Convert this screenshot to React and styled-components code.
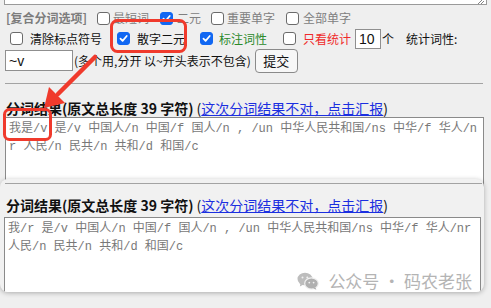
import React from "react";
import styled, { createGlobalStyle } from "styled-components";

const Global = createGlobalStyle`
  html, body { margin: 0; padding: 0; background: #ededed; }
  body { font-family: "Noto Sans CJK SC", "Noto Sans", sans-serif; font-size: 12px; color: #111; }
  * { box-sizing: border-box; }
`;

const Page = styled.div`
  position: relative;
  width: 491px;
  height: 308px;
  overflow: hidden;
  background: #efefef;
`;

const TopArea = styled.div`
  margin: 0 4px;
  height: 5px;
  background: #fff;
  border: 1px solid #9a9a9a;
  border-top: none;
  display: flex;
  justify-content: flex-end;
  align-items: flex-end;
  padding-right: 2px;
`;

const Row = styled.div`
  display: flex;
  align-items: center;
  height: ${(p) => p.h}px;
  margin-top: ${(p) => p.mt || 0}px;
  padding-left: ${(p) => p.pl || 0}px;
  white-space: nowrap;
  line-height: 1;
`;

const SectionLabel = styled.span`
  color: #7c7c7c;
  font-weight: bold;
  font-size: 12px;
  width: 81px;
`;

const Option = styled.label`
  display: inline-flex;
  align-items: center;
  gap: ${(p) => p.gap}px;
  margin-left: ${(p) => p.ml || 0}px;
  color: ${(p) => p.color || "#111"};
  font-size: 12px;
`;

const Box = styled.span`
  width: 13px;
  height: 13px;
  border-radius: 3px;
  flex: none;
  display: inline-flex;
  align-items: center;
  justify-content: center;
  background: ${(p) => (p.checked ? "#1167f2" : "#fff")};
  border: 1px solid ${(p) => (p.checked ? "#1167f2" : "#6b6b6b")};
`;

const Check = ({ checked }) => (
  <Box checked={checked}>
    {checked && (
      <svg width="9" height="9" viewBox="0 0 10 10">
        <path d="M1.6 5.2 L4 7.6 L8.6 2.2" fill="none" stroke="#fff" strokeWidth="1.9" strokeLinecap="round" strokeLinejoin="round" />
      </svg>
    )}
  </Box>
);

const TextInput = styled.div`
  width: ${(p) => p.w}px;
  height: ${(p) => p.h}px;
  margin-left: ${(p) => p.ml || 0}px;
  background: #fff;
  border: 1px solid #8f8f8f;
  font-family: "Liberation Sans", Arial, sans-serif;
  font-size: 14px;
  display: flex;
  align-items: center;
  padding-left: 3px;
  color: #111;
`;

const Plain = styled.span`
  margin-left: ${(p) => p.ml || 0}px;
  font-size: 12px;
  color: #111;
`;

const Button = styled.div`
  margin-left: ${(p) => p.ml || 0}px;
  width: 43px;
  height: 24px;
  border: 1px solid #8a8a8a;
  border-radius: 4px;
  background: #f7f7f7;
  font-size: 13px;
  display: flex;
  align-items: center;
  justify-content: center;
`;

const Rule = styled.div`
  margin: ${(p) => p.mt}px 0 0 ${(p) => p.ml}px;
  width: ${(p) => p.w}px;
  border-top: 1px solid #a3a3a3;
`;

const Heading = styled.div`
  margin: ${(p) => p.mt}px 0 0 ${(p) => p.ml}px;
  height: 18px;
  line-height: 18px;
  font-size: 14px;
  white-space: nowrap;
  color: #111;
  b { font-weight: bold; }
  a { color: #1b2fe0; text-decoration: underline; }
`;

const ResultBox = styled.div`
  margin: ${(p) => p.mt || 0}px 0 0 ${(p) => p.ml}px;
  width: ${(p) => p.w}px;
  height: ${(p) => p.h}px;
  background: #fff;
  border: 1px solid #8a8a8a;
  padding: 2px ${(p) => p.px}px;
  font-family: "Liberation Mono", "Noto Sans CJK SC", monospace;
  font-size: 12px;
  line-height: 18px;
  color: #787878;
  white-space: pre;
  overflow: hidden;
`;

const Card = styled.div`
  position: relative;
  z-index: 1;
  margin-top: -8px;
  width: 484px;
  height: 113px;
  border-radius: 8px;
  background: #f1f1f1;
  box-shadow: 0 1px 5px rgba(0, 0, 0, 0.28);
  overflow: hidden;
  padding-top: 4px;
`;

const Watermark = styled.div`
  position: absolute;
  right: 12px;
  bottom: 2px;
  display: flex;
  align-items: center;
  gap: 9px;
  font-size: 17px;
  line-height: 19px;
  color: #b4b4b4;
  white-space: nowrap;
`;

const Annot = styled.svg`
  position: absolute;
  left: 0;
  top: 0;
  z-index: 5;
  pointer-events: none;
`;

const WeChat = () => (
  <svg width="22" height="18" viewBox="0 0 22 18">
    <ellipse cx="8" cy="7" rx="7.5" ry="6.3" fill="#bdbdbd" />
    <path d="M3.5 11.5 L2.8 14.6 L6.5 12.5 Z" fill="#bdbdbd" />
    <ellipse cx="14.5" cy="11.5" rx="6.8" ry="5.6" fill="#b0b0b0" stroke="#f1f1f1" strokeWidth="1.2" />
    <path d="M18.5 15.5 L19.4 17.8 L16.2 16.4 Z" fill="#b0b0b0" />
    <circle cx="5.5" cy="5.5" r="1" fill="#f1f1f1" />
    <circle cx="10.3" cy="5.5" r="1" fill="#f1f1f1" />
    <circle cx="12.3" cy="10.6" r="0.9" fill="#f1f1f1" />
    <circle cx="16.6" cy="10.6" r="0.9" fill="#f1f1f1" />
  </svg>
);

const line1a = "我是/v 是/v 中国人/n 中国/f 国人/n , /un 中华人民共和国/ns 中华/f 华人/n";
const line1b = "r 人民/n 民共/n 共和/d 和国/c";
const line2a = "我/r 是/v 中国人/n 中国/f 国人/n , /un 中华人民共和国/ns 中华/f 华人/nr";
const line2b = "人民/n 民共/n 共和/d 和国/c";

const ResultHeading = ({ mt, ml }) => (
  <Heading mt={mt} ml={ml}>
    <b>分词结果(原文总长度 39 字符)</b> (<a>这次分词结果不对，点击汇报</a>)
  </Heading>
);

export default function App() {
  return (
    <Page>
      <Global />
      <TopArea>
        <svg width="10" height="5" viewBox="0 0 10 5">
          <path d="M4 5 L9 0 M7 5 L10 2" stroke="#777" strokeWidth="0.9" />
        </svg>
      </TopArea>

      <Row h={20} mt={3} pl={6}>
        <SectionLabel>[复合分词选项]</SectionLabel>
        <Option ml={10} gap={3} color="#808080"><Check />最短词</Option>
        <Option ml={11} gap={4} color="#808080"><Check checked />二元</Option>
        <Option ml={10} gap={3} color="#808080"><Check />重要单字</Option>
        <Option ml={11} gap={4} color="#808080"><Check />全部单字</Option>
      </Row>

      <Row h={21} pl={10}>
        <Option gap={7}><Check />清除标点符号</Option>
        <Option ml={15} gap={7}><Check checked />散字二元</Option>
        <Option ml={15} gap={6} color="#2b8a2b"><Check checked />标注词性</Option>
        <Option ml={16} gap={7} color="#f02a2a"><Check />只看统计</Option>
        <TextInput w={26} h={20} ml={4}>10</TextInput>
        <Plain ml={1}>个</Plain>
        <Plain ml={12}>统计词性:</Plain>
      </Row>

      <Row h={23} pl={5}>
        <TextInput w={68} h={21}>~v</TextInput>
        <Plain ml={1}>(多个用,分开 以~开头表示不包含)</Plain>
        <Button ml={4}>提交</Button>
      </Row>

      <Rule mt={11} ml={5} w={478} />
      <ResultHeading mt={15} ml={6} />
      <ResultBox ml={5} w={479} h={70} px={3}>
        {line1a + "\n" + line1b}
      </ResultBox>

      <Card>
        <Rule mt={0} ml={5} w={477} />
        <ResultHeading mt={12} ml={6} />
        <ResultBox mt={3} ml={4} w={477} h={120} px={3}>
          {line2a + "\n" + line2b}
        </ResultBox>
        <Watermark>
          <WeChat />
          <span>公众号 · 码农老张</span>
        </Watermark>
      </Card>

      <Annot width="491" height="308" viewBox="0 0 491 308">
        <rect x="111.5" y="20.5" width="74" height="31" rx="6" fill="none" stroke="#f03a2c" strokeWidth="3" />
        <rect x="4.5" y="109.5" width="46" height="30" rx="5" fill="none" stroke="#f03a2c" strokeWidth="3" />
        <line x1="95" y1="57" x2="58" y2="94" stroke="#f03a2c" strokeWidth="4.5" strokeLinecap="round" />
        <polygon points="44,108 49,87 65,103" fill="#f03a2c" />
      </Annot>
    </Page>
  );
}
